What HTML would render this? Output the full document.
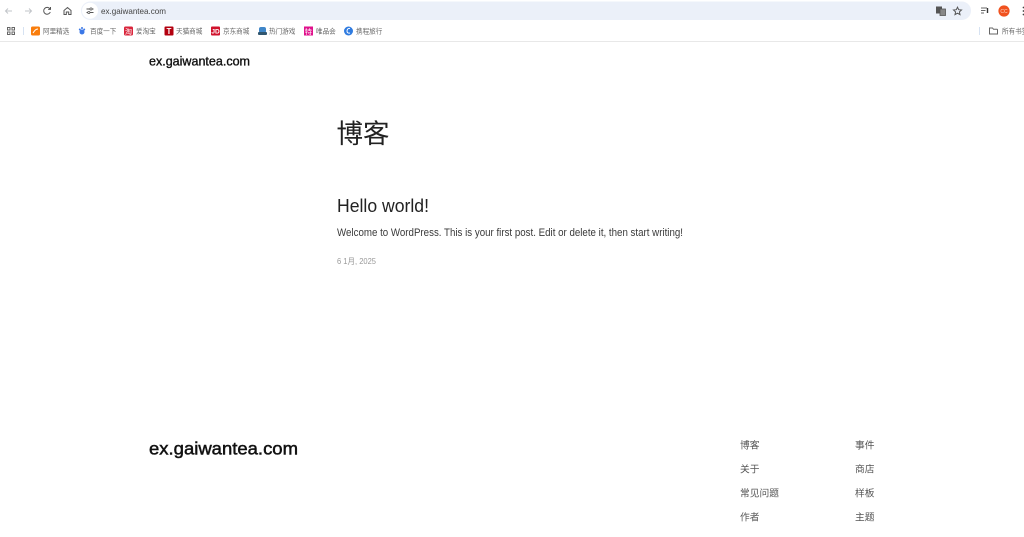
<!DOCTYPE html>
<html><head><meta charset="utf-8"><style>
html,body{margin:0;padding:0;background:#fff;width:1024px;height:537px;overflow:hidden}
svg{display:block}
text{font-family:"Liberation Sans","Noto Sans CJK SC",sans-serif}
.b{font-size:6.6px;fill:#666}
.f{font-size:9.75px;fill:#555}
</style></head><body>
<svg width="1024" height="537" viewBox="0 0 1024 537" xmlns="http://www.w3.org/2000/svg">
<rect width="1024" height="537" fill="#fff"/>
<!-- toolbar -->
<path d="M12 11H5.500M8 8.500L5.500 11 8 13.500" fill="none" stroke="#c2c5c9" stroke-width="1"/>
<path d="M25 11h6.500M29 8.500l2.500 2.500-2.500 2.500" fill="none" stroke="#c2c5c9" stroke-width="1"/>
<path d="M50 9a3.400 3.400 0 1 0 .3 3M50.500 7V9.400H48.100" fill="none" stroke="#555" stroke-width="1"/>
<path d="M64 10.500l3.500-3 3.500 3V14.500h-2.300v-2.500h-2.400v2.500H64z" fill="none" stroke="#555" stroke-width="1"/>
<rect x="81" y="1.500" width="890" height="18.500" rx="9.200" fill="#ebf0f9"/>
<circle cx="90" cy="10.700" r="8" fill="#fff"/>
<path d="M86.500 9h3M92 9h1.500M86.500 12.500h1.500M90 12.500h3.500" stroke="#555" stroke-width="1"/>
<circle cx="91" cy="9" r="1.100" fill="none" stroke="#555" stroke-width=".8"/>
<circle cx="88.800" cy="12.500" r="1.100" fill="none" stroke="#555" stroke-width=".8"/>
<text x="101" y="14" font-size="8.500" fill="#444" textLength="65" lengthAdjust="spacingAndGlyphs">ex.gaiwantea.com</text>
<rect x="936" y="6.500" width="6" height="7" fill="#555"/><rect x="940" y="9" width="5.500" height="6.500" fill="#888" stroke="#555" stroke-width=".8"/>
<path d="M957.500 7.200l1.200 2.500 2.800.3-2.100 1.900.6 2.700-2.500-1.400-2.500 1.400.6-2.700-2.100-1.900 2.800-.3z" fill="none" stroke="#555" stroke-width="1"/>
<path d="M981 8h6M981 10.500h4.500M981 13h3" stroke="#666" stroke-width="1"/><path d="M987.500 8v5" stroke="#333" stroke-width="1.400"/>
<circle cx="1004" cy="11" r="5.600" fill="#f0521f"/>
<text x="1004" y="13" font-size="5" fill="#ffd8c8" text-anchor="middle">CC</text>
<circle cx="1023.500" cy="7.500" r=".9" fill="#444"/><circle cx="1023.500" cy="11" r=".9" fill="#444"/><circle cx="1023.500" cy="14.500" r=".9" fill="#444"/>
<!-- bookmarks bar -->
<g fill="none" stroke="#666" stroke-width="1"><rect x="7.500" y="27.500" width="2.500" height="2.500"/><rect x="12" y="27.500" width="2.500" height="2.500"/><rect x="7.500" y="32" width="2.500" height="2.500"/><rect x="12" y="32" width="2.500" height="2.500"/></g>
<rect x="23" y="27" width="1" height="8" fill="#d6e2f2"/>
<rect x="31" y="26.500" width="9" height="9" rx="1.500" fill="#f97d0c"/><path d="M33 33c2-3 3-4 5-4" stroke="#fff" stroke-width="1" fill="none"/>
<text class="b" x="43" y="33.500">阿里精选</text>
<circle cx="82" cy="32" r="2.500" fill="#3b78e7"/><circle cx="79.800" cy="29.500" r="1" fill="#3b78e7"/><circle cx="84.200" cy="29.500" r="1" fill="#3b78e7"/><circle cx="82" cy="28" r="1" fill="#3b78e7"/>
<text class="b" x="90" y="33.500">百度一下</text>
<rect x="124" y="26.500" width="9" height="9" rx="1.500" fill="#d9263c"/><text x="128.500" y="34" font-size="7" fill="#fff" text-anchor="middle">淘</text>
<text class="b" x="136" y="33.500">爱淘宝</text>
<rect x="164.500" y="26.500" width="9" height="9" rx="1" fill="#b3000f"/><text x="169" y="34" font-size="8" font-weight="bold" fill="#fff" text-anchor="middle">T</text>
<text class="b" x="176" y="33.500">天猫商城</text>
<rect x="211" y="26.500" width="9" height="9" rx="1" fill="#d0122c"/><text x="215.500" y="33.700" font-size="6.500" font-weight="bold" fill="#fff" text-anchor="middle">JD</text>
<text class="b" x="223" y="33.500">京东商城</text>
<rect x="259" y="27" width="7" height="6" rx="2" fill="#3f86c8"/><rect x="258" y="32" width="9" height="3" rx="1" fill="#30566f"/>
<text class="b" x="269" y="33.500">热门游戏</text>
<rect x="304" y="26.500" width="9" height="9" fill="#e0128c"/><text x="308.500" y="34" font-size="7" fill="#fff" text-anchor="middle">特</text>
<text class="b" x="316" y="33.500">唯品会</text>
<circle cx="348.500" cy="31" r="4.500" fill="#2f7be0"/><path d="M350 28.500c-2-.5-3 1-3 2.500s1 2.500 3 2" fill="none" stroke="#fff" stroke-width="1"/>
<text class="b" x="356" y="33.500">携程旅行</text>
<rect x="979" y="27" width="1" height="8" fill="#d6e2f2"/>
<path d="M989.500 28h3l1 1.300h3.500a.5.500 0 0 1 .5.500V34h-8z" fill="none" stroke="#666" stroke-width="1"/>
<text class="b" x="1002" y="33.500">所有书签</text>
<rect y="41" width="1024" height="1" fill="#e8e8e8"/>
<!-- page -->
<text x="149" y="65.500" font-size="12.500px" fill="#111" textLength="101" lengthAdjust="spacingAndGlyphs" stroke="#111" stroke-width=".35">ex.gaiwantea.com</text>
<text x="336.500" y="143" font-size="26.500px" fill="#222">博客</text>
<text x="337" y="212" font-size="18.500px" fill="#222" textLength="92" lengthAdjust="spacingAndGlyphs">Hello world!</text>
<text x="337" y="236" font-size="10.800px" fill="#3a3a3a" textLength="346" lengthAdjust="spacingAndGlyphs">Welcome to WordPress. This is your first post. Edit or delete it, then start writing!</text>
<text x="337" y="264" font-size="8px" fill="#999" textLength="39" lengthAdjust="spacingAndGlyphs">6 1月, 2025</text>
<text x="149" y="454.500" font-size="17.800px" fill="#111" stroke="#111" stroke-width=".5" textLength="149" lengthAdjust="spacingAndGlyphs">ex.gaiwantea.com</text>
<text class="f" x="740" y="448.500">博客</text>
<text class="f" x="855" y="448.500">事件</text>
<text class="f" x="740" y="472.500">关于</text>
<text class="f" x="855" y="472.500">商店</text>
<text class="f" x="740" y="496.500">常见问题</text>
<text class="f" x="855" y="496.500">样板</text>
<text class="f" x="740" y="520.500">作者</text>
<text class="f" x="855" y="520.500">主题</text>
</svg>
</body></html>
